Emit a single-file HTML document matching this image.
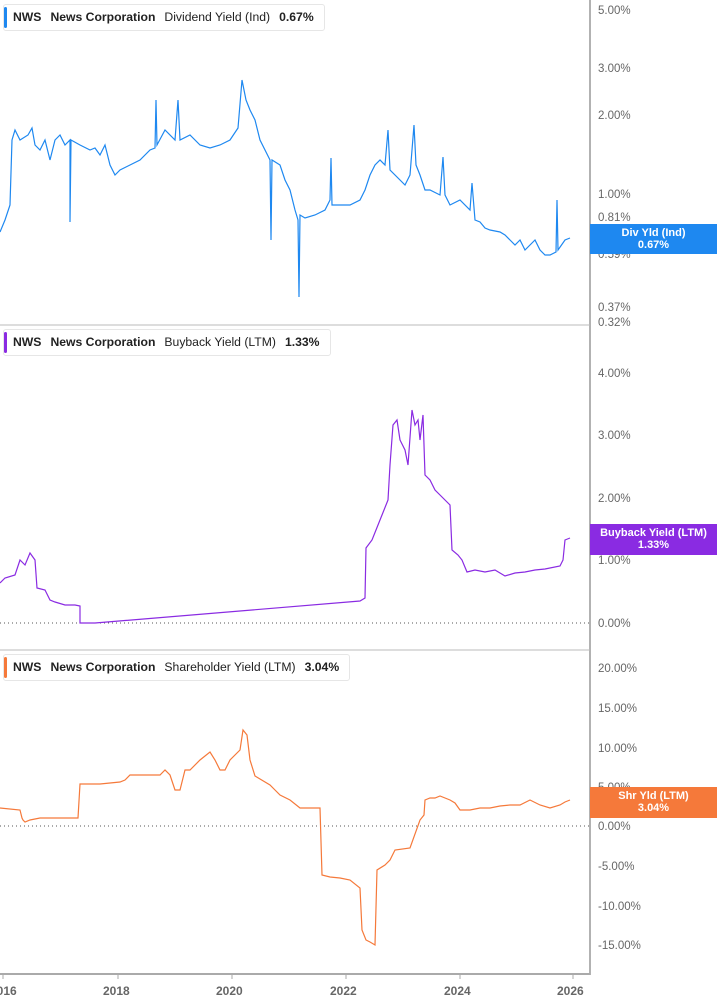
<!DOCTYPE html>
<html><head><meta charset="utf-8"><style>
body{margin:0;width:717px;height:1005px;overflow:hidden;background:#fff;font-family:"Liberation Sans",Arial,sans-serif;}
.lg{position:absolute;left:3px;height:25px;border:1px solid #e6e6e6;border-radius:3px;background:#fff;font-size:12.2px;font-weight:bold;color:#222;line-height:25px;padding-left:9px;padding-right:10px;white-space:nowrap}
.lg i{position:absolute;left:0;top:2px;bottom:2px;width:3px;border-radius:2px}
.lg span{margin-right:9px}
.lg .n{font-weight:normal}
.tag{position:absolute;left:590px;width:127px;color:#fff;font-size:11px;font-weight:bold;text-align:center;line-height:12px;padding-top:3px;box-sizing:border-box}
</style></head><body>
<svg width="717" height="1005" style="position:absolute;left:0;top:0" font-family="Liberation Sans,Arial,sans-serif" font-size="11.5" fill="#666">
<line x1="590" y1="0" x2="590" y2="975" stroke="#888" stroke-width="1.3"/>
<line x1="0" y1="325" x2="590" y2="325" stroke="#bbb"/>
<line x1="0" y1="650" x2="590" y2="650" stroke="#bbb"/>
<line x1="0" y1="974" x2="590" y2="974" stroke="#aaa" stroke-width="2"/>
<line x1="0" y1="623" x2="590" y2="623" stroke="#555" stroke-dasharray="1,3"/>
<line x1="0" y1="826" x2="590" y2="826" stroke="#555" stroke-dasharray="1,3"/>
<g fill="#666">
<text x="598" y="14">5.00%</text><text x="598" y="72">3.00%</text><text x="598" y="119">2.00%</text><text x="598" y="198">1.00%</text><text x="598" y="221">0.81%</text><text x="598" y="258">0.59%</text><text x="598" y="311">0.37%</text><text x="598" y="326">0.32%</text>
<text x="598" y="377">4.00%</text><text x="598" y="439">3.00%</text><text x="598" y="502">2.00%</text><text x="598" y="564">1.00%</text><text x="598" y="627">0.00%</text>
<text x="598" y="672">20.00%</text><text x="598" y="712">15.00%</text><text x="598" y="752">10.00%</text><text x="598" y="791">5.00%</text><text x="598" y="830">0.00%</text><text x="598" y="870">-5.00%</text><text x="598" y="910">-10.00%</text><text x="598" y="949">-15.00%</text>
</g>
<g font-weight="bold" font-size="12" fill="#666">
<text x="-10" y="995">2016</text><text x="103" y="995">2018</text><text x="216" y="995">2020</text><text x="330" y="995">2022</text><text x="444" y="995">2024</text><text x="557" y="995">2026</text>
</g>
<g stroke="#aaa"><line x1="3" y1="974" x2="3" y2="979"/><line x1="118" y1="974" x2="118" y2="979"/><line x1="232" y1="974" x2="232" y2="979"/><line x1="346" y1="974" x2="346" y2="979"/><line x1="460" y1="974" x2="460" y2="979"/><line x1="573" y1="974" x2="573" y2="979"/></g>
<polyline fill="none" stroke="#1e88f0" stroke-width="1.2" points="0,232 5,220 10,205 12,140 15,130 20,140 28,135 32,128 35,145 40,150 45,140 50,160 55,140 60,135 65,145 70,140 70,222 71,140 80,145 90,150 95,148 100,155 105,145 110,165 115,175 120,170 130,165 140,160 150,150 155,148 156,100 157,145 165,130 175,140 178,100 180,140 190,135 200,145 210,148 220,145 230,140 238,128 242,80 246,100 250,110 255,120 260,140 265,150 270,160 271,240 272,160 280,165 285,180 290,190 295,210 298,220 299,297 300,215 305,218 315,215 325,210 330,200 331,158 332,205 340,205 350,205 360,200 365,190 370,175 375,165 380,160 385,165 388,130 390,170 400,180 405,185 410,175 414,125 416,165 420,175 425,190 430,190 440,195 443,157 445,195 450,205 460,200 470,210 472,183 475,220 480,222 485,228 490,230 500,232 505,235 510,240 515,245 520,240 525,250 530,245 535,240 540,250 545,255 550,255 556,252 557,200 558,250 565,240 570,238"/>
<polyline fill="none" stroke="#8a2be2" stroke-width="1.2" points="0,583 5,578 15,575 20,560 25,565 30,553 35,560 37,588 45,590 50,600 55,602 65,605 75,605 80,606 80,623 95,623 360,601 365,598 366,548 372,540 378,525 382,515 388,500 390,465 393,425 397,420 400,440 405,450 408,465 412,410 415,425 418,420 420,440 423,415 425,475 430,480 435,490 440,495 445,500 450,505 452,550 458,555 462,560 467,572 475,570 485,572 495,570 505,576 515,573 525,572 535,570 545,569 560,566 563,560 565,540 570,538"/>
<polyline fill="none" stroke="#f5793a" stroke-width="1.2" points="0,808 20,810 22,818 23,820 25,822 30,820 40,818 50,818 60,818 78,818 80,784 100,784 120,782 125,780 130,775 160,775 165,770 170,775 175,790 180,790 185,770 190,770 200,760 210,752 215,760 220,770 225,770 230,760 240,750 243,730 247,735 250,760 255,776 270,785 275,790 280,795 290,800 300,808 320,808 322,875 330,877 340,878 350,880 360,888 362,930 366,940 370,942 375,945 377,870 385,865 390,860 395,850 410,848 420,820 424,815 425,800 430,798 435,798 440,796 450,800 455,803 460,810 470,810 480,808 490,808 500,806 510,805 520,805 530,800 540,805 550,808 560,805 565,802 570,800"/>
</svg>
<div class="lg" style="top:4px"><i style="background:#1e88f0"></i><span>NWS</span><span>News Corporation</span><span class="n">Dividend Yield (Ind)</span>0.67%</div>
<div class="lg" style="top:329px"><i style="background:#8a2be2"></i><span>NWS</span><span>News Corporation</span><span class="n">Buyback Yield (LTM)</span>1.33%</div>
<div class="lg" style="top:654px"><i style="background:#f5793a"></i><span>NWS</span><span>News Corporation</span><span class="n">Shareholder Yield (LTM)</span>3.04%</div>
<div class="tag" style="top:224px;height:30px;background:#1e88f0">Div Yld (Ind)<br>0.67%</div>
<div class="tag" style="top:524px;height:31px;background:#8a2be2">Buyback Yield (LTM)<br>1.33%</div>
<div class="tag" style="top:787px;height:31px;background:#f5793a">Shr Yld (LTM)<br>3.04%</div>
</body></html>
